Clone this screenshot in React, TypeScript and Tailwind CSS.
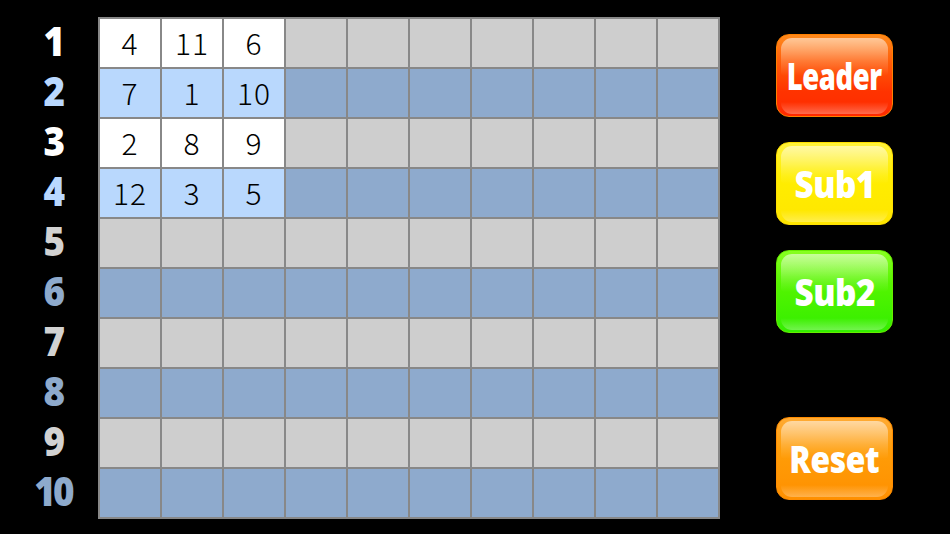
import React from "react";

const labels = [
  { n: "1", c: "text-white" },
  { n: "2", c: "text-[#b9d8ff]" },
  { n: "3", c: "text-white" },
  { n: "4", c: "text-[#b9d8ff]" },
  { n: "5", c: "text-[#d2d2d2]" },
  { n: "6", c: "text-[#8eaacc]" },
  { n: "7", c: "text-[#d2d2d2]" },
  { n: "8", c: "text-[#8eaacc]" },
  { n: "9", c: "text-[#d2d2d2]" },
  { n: "10", c: "text-[#8eaacc]" },
];

const filled: string[][] = [
  ["4", "11", "6"],
  ["7", "1", "10"],
  ["2", "8", "9"],
  ["12", "3", "5"],
];

function cellBg(r: number, c: number) {
  const even = r % 2 === 0;
  if (r < 4 && c < 3) return even ? "bg-white" : "bg-[#b9d8fd]";
  return even ? "bg-[#cecece]" : "bg-[#8eaacd]";
}

type Btn = { label: string; base: string; border: string; mt: string; sx: string };

const buttons: Btn[] = [
  {
    label: "Leader",
    base: "bg-[linear-gradient(to_bottom,#ff8a1c_0%,#ff5a08_35%,#ff3300_70%,#ff2a00_100%)]",
    border: "border-[#ff8000]",
    mt: "mt-[34px]",
    sx: "scale-x-[0.74]",
  },
  {
    label: "Sub1",
    base: "bg-[linear-gradient(to_bottom,#fff23a_0%,#ffee00_40%,#ffe600_100%)]",
    border: "border-[#ffe000]",
    mt: "mt-[25px]",
    sx: "scale-x-[0.9]",
  },
  {
    label: "Sub2",
    base: "bg-[linear-gradient(to_bottom,#88ff20_0%,#55f500_40%,#33ee00_100%)]",
    border: "border-[#66ee00]",
    mt: "mt-[25px]",
    sx: "scale-x-[0.9]",
  },
  {
    label: "Reset",
    base: "bg-[linear-gradient(to_bottom,#ffaa33_0%,#ff9d08_40%,#ff9000_100%)]",
    border: "border-[#ff8c00]",
    mt: "mt-[84px]",
    sx: "scale-x-[0.86]",
  },
];

function GlossButton({ b }: { b: Btn }) {
  return (
    <div
      className={`relative w-[117px] h-[83px] rounded-[13px] border-[1.5px] ${b.border} ${b.base} ${b.mt} overflow-hidden flex items-center justify-center`}
    >
      <div className="absolute left-[4px] right-[4px] top-[3px] h-[38px] rounded-t-[11px] rounded-b-[4px] bg-[linear-gradient(to_bottom,rgba(255,255,255,0.55)_0%,rgba(255,255,255,0.18)_60%,rgba(255,255,255,0)_100%)]" />
      <div className="absolute left-[4px] right-[4px] bottom-[2px] h-[12px] rounded-b-[11px] bg-[linear-gradient(to_top,rgba(255,255,255,0.3)_0%,rgba(255,255,255,0)_100%)]" />
      <span
        className={`relative text-white font-extrabold text-[37px] leading-none tracking-[-0.5px] ${b.sx}`}
        style={{ fontFamily: '"Open Sans", "Noto Sans", sans-serif' }}
      >
        {b.label}
      </span>
    </div>
  );
}

export default function App() {
  return (
    <div className="w-[950px] h-[534px] bg-black flex overflow-hidden">
      <div className="w-[98px] pt-[16px] pl-[8px] flex flex-col">
        {labels.map((l) => (
          <div
            key={l.n}
            className={`h-[50px] flex items-center justify-center font-extrabold text-[40px] leading-none tracking-[-3px] scale-x-[0.92] ${l.c}`}
            style={{ fontFamily: '"Open Sans", "Noto Sans", sans-serif' }}
          >
            {l.n}
          </div>
        ))}
      </div>
      <div className="mt-[17px] h-[502px] border border-[#888888] grid grid-cols-[repeat(10,62px)] grid-rows-[repeat(10,50px)]">
        {Array.from({ length: 10 }).map((_, r) =>
          Array.from({ length: 10 }).map((_, c) => (
            <div
              key={`${r}-${c}`}
              className={`border border-[#888888] flex items-center justify-center pb-[3px] text-[30px] leading-none text-black tracking-[1px] ${cellBg(r, c)}`}
              style={{ fontFamily: '"Noto Sans CJK JP", "Noto Sans", sans-serif', fontWeight: 300 }}
            >
              {r < 4 && c < 3 ? filled[r][c] : ""}
            </div>
          ))
        )}
      </div>
      <div className="ml-[56px] flex flex-col">
        {buttons.map((b) => (
          <GlossButton key={b.label} b={b} />
        ))}
      </div>
    </div>
  );
}
